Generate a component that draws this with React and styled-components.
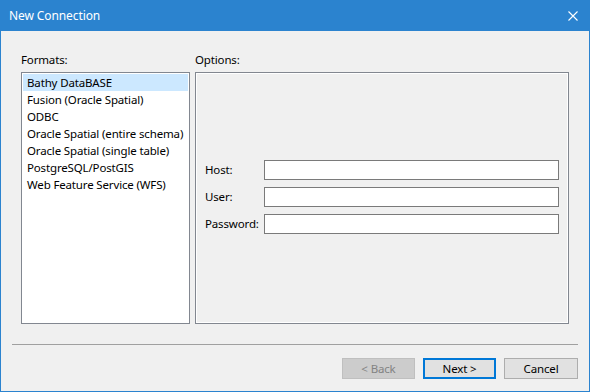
import styled, { createGlobalStyle } from "styled-components";

const GlobalStyle = createGlobalStyle`
  html, body {
    margin: 0;
    padding: 0;
    background: #f0f0f0;
  }
  * { box-sizing: border-box; }
`;

const Window = styled.div`
  width: 590px;
  height: 392px;
  border: 1px solid #2b83cf;
  background: #f0f0f0;
  font-family: "Noto Sans", "Segoe UI", sans-serif;
  font-size: 11.5px;
  letter-spacing: -0.15px;
  color: #000;
  display: flex;
  flex-direction: column;
`;

const TitleBar = styled.div`
  height: 30px;
  background: #2b83cf;
  color: #fff;
  display: flex;
  align-items: center;
  justify-content: space-between;
  padding: 0 11px 0 8px;
`;

const Title = styled.span`
  font-size: 12px;
  letter-spacing: -0.1px;
  line-height: 16px;
`;

const CloseIcon = () => (
  <svg width="10" height="10" viewBox="0 0 10 10">
    <path d="M0.5 0.5 L9.5 9.5 M9.5 0.5 L0.5 9.5" stroke="#fff" strokeWidth="1.1" />
  </svg>
);

const Body = styled.div`
  flex: 1;
  display: flex;
  flex-direction: column;
  padding: 21px 11px 12px 11px;
`;

const Columns = styled.div`
  display: grid;
  grid-template-columns: 169px 374px;
  column-gap: 5px;
  row-gap: 4px;
  grid-template-rows: 16px 252px;
  padding-left: 9px;
`;

const Label = styled.div`
  line-height: 16px;
  color: #000;
`;

const ListBox = styled.div`
  border: 1px solid #828790;
  background: #fff;
  padding: 1px;
  overflow: hidden;
`;

const ListItem = styled.div`
  height: 17px;
  line-height: 17px;
  padding-left: 4px;
  white-space: nowrap;
  background: ${(p) => (p.$selected ? "#cce8ff" : "transparent")};
`;

const OptionsBox = styled.div`
  border: 1px solid #828790;
  box-shadow: inset 0 0 0 1px #fff;
  padding: 87px 9px 0 9px;
  display: grid;
  grid-template-columns: 59px 295px;
  grid-auto-rows: 20px;
  row-gap: 7px;
  align-content: start;
`;

const FieldLabel = styled.label`
  line-height: 20px;
`;

const TextInput = styled.input`
  width: 295px;
  height: 20px;
  border: 1px solid #7a7a7a;
  background: #fff;
  margin: 0;
  padding: 0 3px;
  font: inherit;
  outline: none;
`;

const Separator = styled.div`
  height: 1px;
  background: #a0a0a0;
  margin-top: 20px;
`;

const ButtonRow = styled.div`
  display: flex;
  justify-content: flex-end;
  gap: 8px;
  margin-top: 13px;
`;

const Button = styled.button`
  width: ${(p) => p.$w || 73}px;
  height: 21px;
  margin: 0;
  padding: 0;
  font: inherit;
  letter-spacing: inherit;
  background: ${(p) => (p.disabled ? "#cccccc" : "#e1e1e1")};
  color: ${(p) => (p.disabled ? "#838383" : "#000")};
  border: ${(p) =>
    p.$default ? "2px solid #0078d7" : p.disabled ? "1px solid #bfbfbf" : "1px solid #adadad"};
  cursor: default;
`;

const formats = [
  "Bathy DataBASE",
  "Fusion (Oracle Spatial)",
  "ODBC",
  "Oracle Spatial (entire schema)",
  "Oracle Spatial (single table)",
  "PostgreSQL/PostGIS",
  "Web Feature Service (WFS)",
];

export default function App() {
  return (
    <>
      <GlobalStyle />
      <Window>
        <TitleBar>
          <Title>New Connection</Title>
          <CloseIcon />
        </TitleBar>
        <Body>
          <Columns>
            <Label>Formats:</Label>
            <Label>Options:</Label>
            <ListBox>
              {formats.map((f, i) => (
                <ListItem key={f} $selected={i === 0}>
                  {f}
                </ListItem>
              ))}
            </ListBox>
            <OptionsBox>
              <FieldLabel>Host:</FieldLabel>
              <TextInput />
              <FieldLabel>User:</FieldLabel>
              <TextInput />
              <FieldLabel>Password:</FieldLabel>
              <TextInput type="password" />
            </OptionsBox>
          </Columns>
          <Separator />
          <ButtonRow>
            <Button disabled>&lt; Back</Button>
            <Button $default>Next &gt;</Button>
            <Button $w={74}>Cancel</Button>
          </ButtonRow>
        </Body>
      </Window>
    </>
  );
}
